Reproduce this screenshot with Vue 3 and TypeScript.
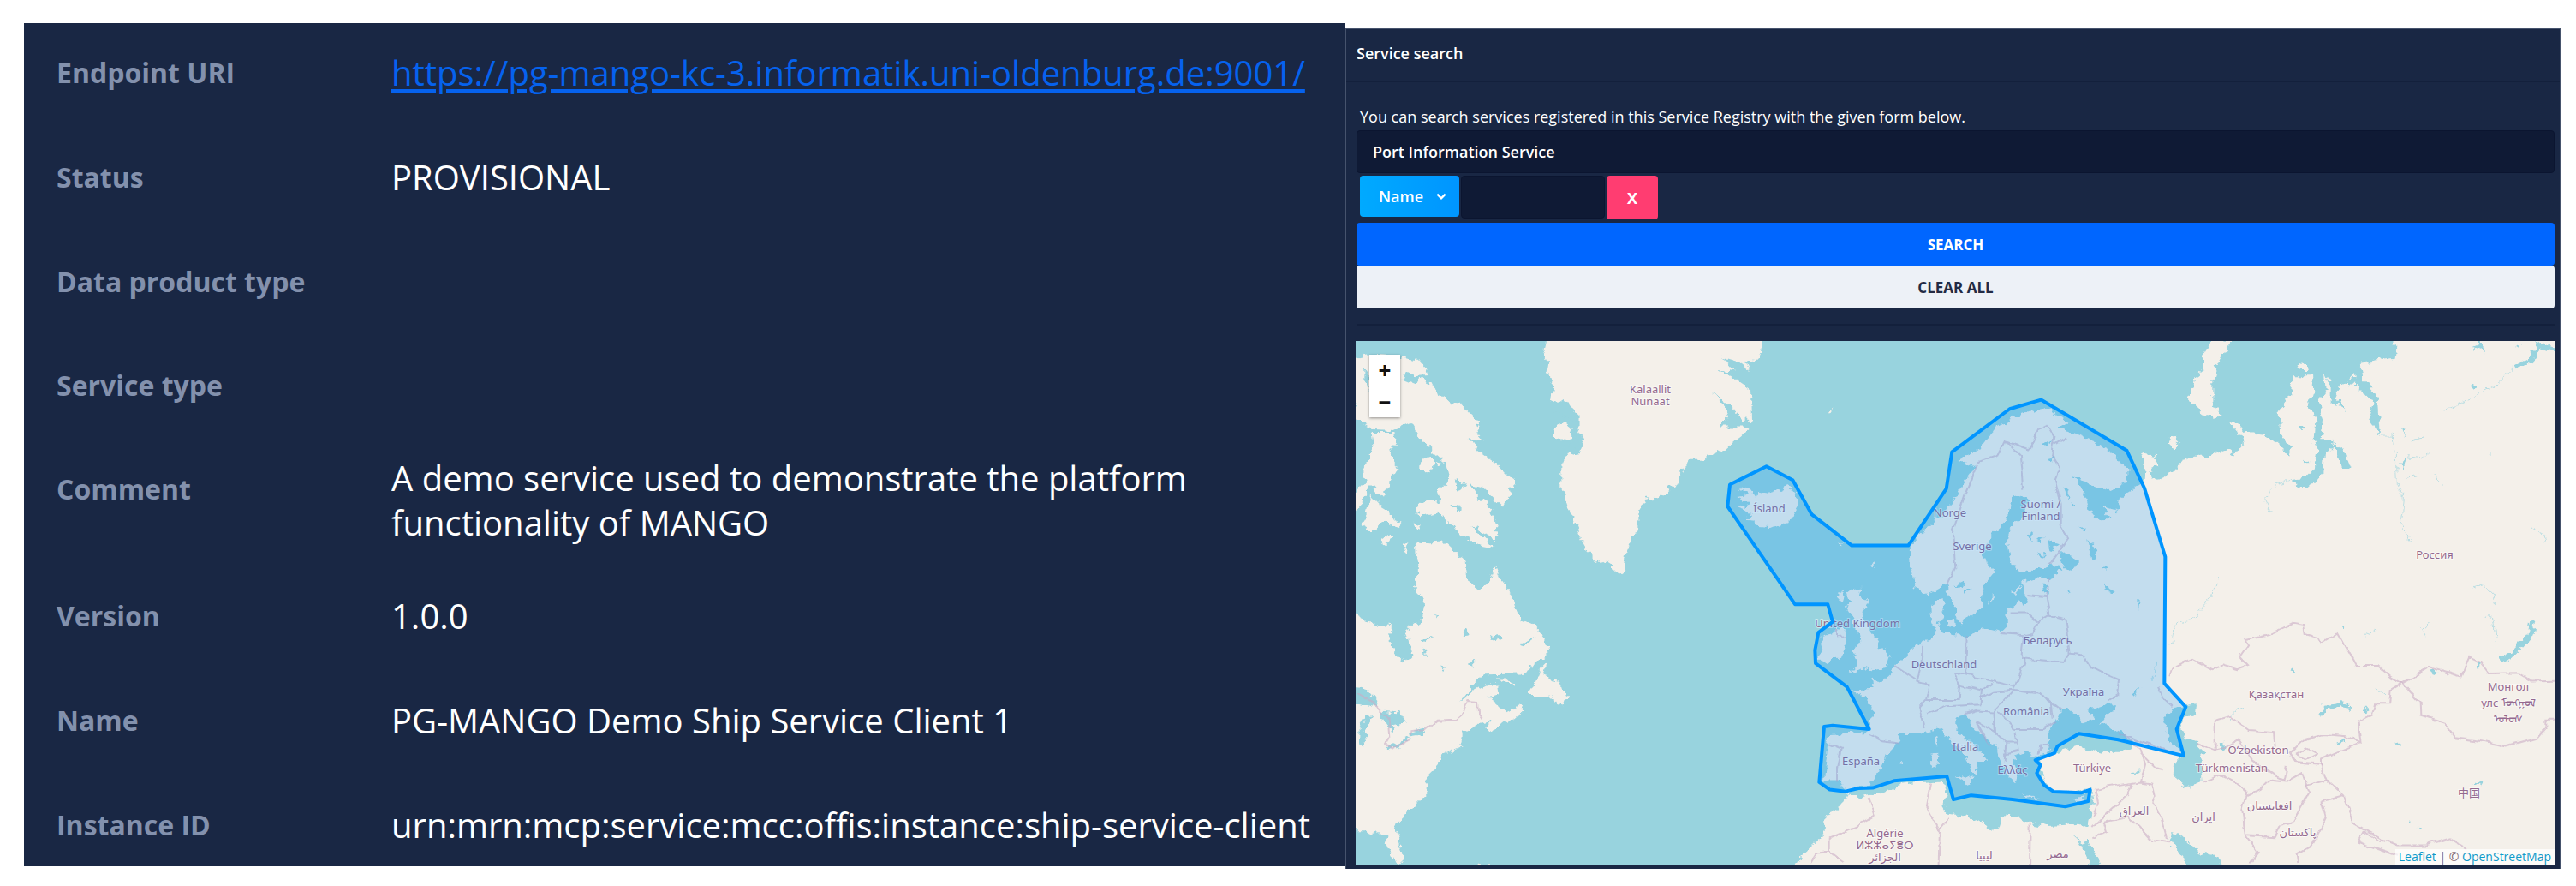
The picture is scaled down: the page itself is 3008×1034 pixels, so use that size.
<script setup lang="ts">
import { ref } from 'vue'

interface DetailRow {
  label: string
  value?: string
  href?: string
}

interface MapLabel {
  x: number
  y: number
  text: string
}

const details: DetailRow[] = [
  {
    label: 'Endpoint URI',
    value: 'https://pg-mango-kc-3.informatik.uni-oldenburg.de:9001/',
    href: 'https://pg-mango-kc-3.informatik.uni-oldenburg.de:9001/',
  },
  { label: 'Status', value: 'PROVISIONAL' },
  { label: 'Data product type' },
  { label: 'Service type' },
  { label: 'Comment', value: 'A demo service used to demonstrate the platform functionality of MANGO' },
  { label: 'Version', value: '1.0.0' },
  { label: 'Name', value: 'PG-MANGO Demo Ship Service Client 1' },
  { label: 'Instance ID', value: 'urn:mrn:mcp:service:mcc:offis:instance:ship-service-client' },
]

const query = ref('Port Information Service')
const field = ref('Name')
const fieldValue = ref('')

// Coastlines west of Iceland
const westLand: string[] = [
  'M60 65L110 57L225 62L285 68L310 90L318 112L270 115L240 102L230 125L270 138L300 122L345 140L360 172L400 190L440 195L470 220L495 245L508 270L490 275L515 300L470 292L500 330L560 365L600 400L630 418L605 440L610 455L585 488L550 460L510 430L470 420L500 460L540 490L565 545L560 585L520 560L475 540L550 605L500 597L440 570L400 530L350 505L290 515L280 490L310 470L370 478L355 440L400 405L385 360L340 330L300 300L260 245L200 268L120 265L60 235Z',
  'M125 275L205 275L210 310L190 325L212 385L180 430L165 462L130 430L110 430L90 480L60 512V455L110 410L95 385L120 345L130 310Z',
  'M120 455L150 480L180 495L190 520L230 535L215 548L175 530L150 535L130 560L90 540L110 510Z',
  'M158 582L185 566L202 572L180 594Z',
  'M235 597L252 588L245 614Z',
  'M298 378Q300 348 325 347Q348 355 342 380Q315 397 298 385Z',
  'M300 295L318 290L335 310L322 320ZM345 355L378 362L360 370ZM270 530L300 540L290 560Z',
  'M280 585L330 590L380 588L410 610L430 630L455 640L460 700L500 725L535 705L550 670L560 655L580 695L610 730L630 775L650 810L700 830L740 875L745 905L700 935L650 963L515 965L480 995L430 1045L480 1010L520 992L562 992L565 1020L530 1025L556 1040L570 1060L600 1072L630 1060L640 1045L655 1070L630 1088L580 1100L545 1128L525 1115L545 1098L500 1105L440 1130L430 1165L440 1172L370 1195L345 1240L320 1260L320 1300L260 1350L215 1385L210 1410L235 1470L232 1500L210 1497L180 1450L175 1425L150 1413L125 1418L100 1408L60 1408V790L130 820L192 826L195 890L240 935L265 910L250 838L300 810L310 770L300 740L270 715L292 675L285 630Z',
  'M740 930L715 950L690 1000L672 1025L740 1025L760 1040L800 1053L808 1035L790 1000L790 985L750 975L730 970Z',
  'M565 975L600 975L622 992L600 990Z',
  'M735 5L725 40L745 75L740 100L760 130L750 185L780 192L800 180L830 210L850 220L850 270L870 300L850 340L810 330L790 370L790 440L810 470L830 520L860 580L905 645L930 640L960 655L990 680L1008 670L1020 610L1040 575L1060 545L1060 500L1085 465L1130 460L1170 435L1190 430L1215 385L1240 355L1280 355L1360 325L1450 262L1400 262L1330 262L1375 240L1365 205L1320 165L1385 205L1430 240L1458 242L1455 155L1400 125L1340 100L1400 105L1350 60L1410 75L1455 105L1435 70L1480 75L1490 40L1500 5Z',
  'M500 1503L540 1503L540 1510L500 1510Z',
]

const westWater: string[] = [
  'M60 1000L110 1005L145 1040L140 1058L100 1050L60 1045Z',
  'M100 1090L130 1083L100 1120L110 1150L95 1172L78 1165L80 1115Z',
  'M150 1070L220 1075L242 1102L205 1108L195 1140L180 1110Z',
  'M175 1170L260 1142L250 1158L190 1177Z',
  'M255 1128L312 1116L300 1132L258 1138Z',
  'M100 90L116 110L112 160L100 140ZM60 160L72 200L60 220Z',
  'M762 215L850 235L850 320L790 322L830 300L845 250L780 225Z',
  'M415 405L440 415L455 432L425 440ZM405 480L435 488L425 502Z',
  'M540 855L575 850L580 862L548 868ZM440 845L462 835L470 855L450 858Z',
  'M365 950L388 935L370 955ZM300 865L345 858L310 875ZM345 790L362 795L350 800Z',
  'M650 875L700 855L690 862L655 882ZM465 930L480 925L482 945ZM300 890L320 905L305 905Z',
]

// Disko island, inside the bay on Greenland's west coast
const disko = 'M768 255L800 248L828 268L822 285L795 302L766 288Z'

// Coastlines from Iceland to the Yenisei
const eastLand: string[] = [
  'M-515 460L-480 455L-505 435L-480 430L-450 465L-440 445L-400 450L-360 440L-335 428L-300 465L-300 485L-330 525L-400 548L-450 545L-455 530L-485 528L-460 505L-510 490L-470 480Z',
  'M-202 222L-172 206L-185 222Z',
  'M-162 588L-148 590L-150 602ZM-45 655L-28 648L-35 670Z',
  'M-115 725L-80 720L-85 745L-48 755L-80 800L-40 845L-10 890L25 905L10 945L-40 950L-70 945L-125 968L-90 935L-100 925L-90 910L-120 900L-80 875L-90 840L-115 820L-110 800L-125 780L-135 768L-120 760L-130 735Z',
  'M-160 735L-140 725L-150 750L-165 760Z',
  'M-170 835L-132 838L-137 885L-150 915L-215 932L-230 920L-215 890L-225 860L-190 850Z',
  'M-115 1010L-40 1005L-45 980L-10 985L20 962L40 940L80 910L110 880L170 868L180 840L165 810L163 770L205 750L212 785L190 820L200 840L240 855L300 855L360 835L410 845L435 825L432 780L470 760L490 770L500 740L480 705L530 688L575 690L630 670L590 652L520 672L450 660L432 590L440 550L490 510L500 470L480 455L450 460L435 500L430 530L370 570L350 620L360 650L385 675L350 710L340 780L290 800L265 822L240 760L215 710L150 738L110 715L95 660L92 600L130 560L190 520L240 480L270 430L320 375L255 355L330 325L390 265L450 235L520 215L575 205L640 245L610 262L680 285L740 305L800 335L850 380L850 420L800 443L720 425L665 400L700 440L720 500L770 530L790 515L760 485L820 500L830 460L890 430L910 420L915 370L900 335L950 345L965 370L925 385L940 410L985 405L1030 370L1080 345L1130 345L1200 325L1230 342L1260 310L1250 275L1340 285L1400 325L1420 345L1425 320L1390 290L1385 215L1420 180L1435 115L1500 115L1505 170L1490 195L1510 240L1505 300L1520 325L1510 380L1480 405L1425 412L1450 430L1495 432L1540 390L1545 335L1580 315L1605 380L1635 378L1605 320L1570 300L1528 300L1540 240L1520 190L1550 155L1545 105L1565 140L1565 190L1625 215L1580 180L1600 140L1660 145L1700 185L1715 190L1700 240L1740 285L1735 230L1730 175L1680 130L1670 80L1790 65L1795 30L1785 5H2370V1525H1190L1170 1480L1100 1470L1050 1425L1010 1412L995 1430L1040 1480L1060 1525H740L715 1400L735 1310L725 1290L690 1290L640 1300L590 1295L560 1270L540 1230L550 1205L610 1185L680 1168L760 1185L830 1185L880 1165L840 1135L760 1105L810 1050L790 1045L720 1065L740 1090L700 1100L670 1075L640 1058L610 1080L590 1110L570 1160L590 1180L530 1200L490 1185L450 1200L470 1240L460 1275L440 1260L400 1200L395 1170L330 1130L280 1080L250 1085L250 1110L290 1150L340 1185L360 1210L330 1210L325 1250L305 1240L290 1200L240 1160L195 1115L120 1135L60 1135L40 1165L10 1190L-10 1230L-50 1280L-100 1285L-130 1300L-150 1270L-210 1270L-200 1190L-195 1135L-60 1130L-45 1100L-40 1060L-70 1030Z',
  'M250 1255L308 1255L300 1280Z',
  'M163 1190L190 1185L188 1228L168 1232ZM172 1155L188 1145L186 1175Z',
  'M480 1305L540 1313L500 1316ZM662 1322L708 1302L690 1326Z',
  'M42 1220L60 1212L58 1222ZM218 808L245 795L248 828L228 826ZM368 765L378 742L388 745Z',
  'M450 725L480 715L460 735Z',
  'M-318 1525L-290 1480L-210 1420L-205 1370L-150 1340L-125 1300L-90 1315L0 1300L60 1275L150 1270L205 1265L215 1300L205 1335L225 1360L310 1370L395 1412L410 1375L440 1360L510 1385L580 1395L680 1390L730 1400L780 1525Z',
  'M1155 5L1215 17L1165 85L1150 130L1150 190L1190 235L1120 225L1065 185L1070 155L1085 150L1090 120L1120 100L1115 60Z',
  'M997 310Q1005 290 1022 292L1037 305L1020 328Z',
  'M1212 245L1230 248L1262 275L1245 282Z',
  'M1450 102L1458 78L1480 85L1485 102ZM1630 120L1650 102L1652 125ZM1598 140L1625 128L1620 145Z',
]

const eastWater: string[] = [
  'M975 1095L1010 1060L1095 1050L1092 1080L1050 1090L1040 1120L1060 1150L1095 1160L1130 1190L1108 1195L1115 1270L1060 1282L1015 1255L1020 1220L1050 1195L1000 1150Z',
  'M666 1418L700 1450L712 1430L740 1475L775 1520L730 1520L695 1460Z',
  'M618 620L650 615L678 648L655 672L625 655ZM715 580L735 590L748 635L730 640Z',
  'M250 710L280 698L275 718ZM285 725L308 718L285 740ZM555 705L572 712L572 742L558 730Z',
  'M560 310L585 300L575 320ZM580 350L590 340L592 365ZM770 705L790 715L800 732L782 728Z',
  'M638 722L652 728L642 732ZM885 755L895 760L892 776ZM765 665L780 660L785 672Z',
  'M620 260L665 268L640 275ZM630 430L650 440L640 470ZM655 470L675 490L662 492ZM685 545L702 550L690 560Z',
  'M530 585L560 575L548 592ZM575 585L612 595L580 615ZM505 570L520 560L515 585ZM540 615L575 625L550 632Z',
  'M1178 1165L1192 1158L1195 1172L1182 1174ZM1575 1157L1612 1148L1622 1156L1588 1162Z',
  'M1910 958L1922 950L1934 960L1920 968ZM2078 930L2090 925L2088 955L2080 950Z',
  'M1420 958L1435 950L1438 962ZM1600 830L1615 825L1612 840ZM2055 145L2070 138L2078 150L2062 152Z',
  'M2065 1275L2085 1268L2092 1282ZM1810 365L1830 345L1820 382ZM1815 262L1825 265L1822 285Z',
  'M2058 30L2085 20L2110 50L2090 40ZM2070 35L2080 45L2072 46ZM2215 30L2228 35L2220 40Z',
  'M1840 1375L1850 1382L1842 1384ZM1870 1400L1882 1398L1880 1405ZM1795 1163L1808 1160L1806 1168Z',
  'M2118 340L2128 336L2128 346ZM1455 258L1475 262L1460 275ZM1470 355L1490 365L1475 366Z',
  'M875 1240L900 1235L885 1245ZM870 1020L895 1005L880 1028Z',
]

// Rivers and long lakes
const rivers: string[] = [
  'M1740 285L1780 285L1792 340L1795 420L1822 465L1812 545L1845 585',
  'M2205 95L2130 150L2060 180L1960 215',
  'M1425 412L1370 425L1335 465L1360 505',
  'M1170 690L1150 740L1085 805L1020 820L1005 880',
  'M950 930L945 980M2060 720L2100 710L2130 735L2145 765M1890 830L1915 815M1880 825L1900 860',
  'M1835 345L1880 350L1910 338M1840 300L1885 292M1830 405L1870 398M1930 395L1955 425',
  'M1680 855L1720 835M2105 800L2130 795L2145 870M2270 545L2320 570L2305 590M1720 1000L1755 1025',
  'M1205 1100L1210 1080L1260 1060',
]

const wideWater: string[] = [
  'M2275 812L2266 850L2235 880L2195 912L2160 925',
  'M1527 1082L1545 1058L1590 1052L1638 1056',
  'M2350 45L2295 30L2262 72L2210 95',
  'M1680 1055L1695 1070',
]

const borders: string[] = [
  'M-1845 1020L-1790 1045L-1735 1090L-1730 1140L-1748 1165L-1720 1172L-1660 1148L-1658 1130L-1610 1125L-1570 1095L-1500 1093L-1480 1080L-1460 1040L-1425 1042L-1422 1075L-1408 1092',
  'M220 710L250 660L240 560L285 450L330 360L400 340L425 300L480 345L490 440M425 300L510 325L540 270L570 258L595 290L585 340L615 380L600 410L620 480L620 540L645 575L580 650M595 310L640 290',
  'M575 690L568 740L580 795L540 815L500 790L440 790M505 740L565 745M580 795L635 810L650 905L700 910L720 940L780 965L825 980L820 1020L785 1040M650 905L630 930L500 920L480 920L490 850L410 845M545 815L520 850L490 855',
  'M490 920L490 930L460 1000L385 985L285 965L290 855M135 880L130 940L115 985L160 995L150 1035L260 1035L265 990L250 965L290 960M40 940L115 980M150 1035L120 1060L140 1115M150 1075L220 1055L340 1050L345 1010L265 995',
  'M345 1010L380 990M345 1030L380 1015L455 1010L385 1070L330 1068L280 1080M385 1070L390 1130L320 1095L370 1165M455 1010L550 1020L610 1060L620 1060M550 1015L585 1050L590 1090M460 1120L400 1070M460 1120L560 1120L600 1100M460 1130L470 1180L420 1190M390 1130L430 1160L425 1210M430 1160L470 1160M545 1190L550 1165L580 1170',
  'M-50 1135L0 1155L55 1160M-195 1160L-150 1175L-165 1230L-165 1270M-168 835L-168 858L-135 855',
  'M1000 970L1010 945L1080 920L1150 950L1190 938L1240 950L1275 940L1245 915L1275 880L1265 865L1350 850L1430 820L1470 825L1475 850L1520 860L1530 875L1590 845L1655 940L1730 940L1780 975L1815 990L1910 945L2020 970L2050 915L2090 930L2120 962L2220 960L2270 985L2350 983',
  'M1815 990L1880 1045L1882 1080L1960 1100L2000 1145L2100 1155L2180 1170L2290 1145L2320 1115L2320 1095L2350 1095M1815 990L1775 1010L1770 1045L1720 1045L1710 1080L1660 1100L1670 1160L1620 1140L1540 1135L1470 1150L1420 1190L1440 1215L1530 1222L1530 1205L1600 1180L1670 1160',
  'M1160 1180L1160 1095L1210 1083L1280 1125L1365 1130L1370 1170M1095 1160L1160 1180L1190 1175L1240 1150L1290 1210L1370 1255L1400 1265L1410 1222M1440 1190L1480 1175L1515 1190L1480 1205L1440 1190M1530 1222L1550 1265L1480 1280L1465 1245L1410 1270',
  'M1120 1275L1180 1250L1230 1270L1270 1300L1255 1350L1265 1420L1370 1425L1390 1395L1430 1385L1490 1300L1480 1280M1270 1310L1320 1290L1350 1265L1410 1270M1265 1420L1310 1470L1280 1500M1450 1500L1445 1475L1500 1450L1550 1370L1535 1325L1610 1310L1550 1265M1610 1310L1640 1370L1640 1385L1740 1430L1800 1450L1900 1450L1980 1430L2040 1460M1680 1410L1660 1440L1800 1480M1680 1410L1740 1440',
  'M730 1370L750 1330L740 1290L850 1275L900 1270L940 1275L950 1310L940 1330L970 1370L990 1430M730 1400L780 1360L850 1310L870 1270M730 1430L780 1410L770 1385L860 1370L930 1430L1000 1440M900 1270L915 1220L900 1180L840 1135M900 1190L950 1230L980 1235M820 1130L940 1165L1000 1185M960 1000L975 1030L1010 1055',
  'M510 1525L512 1385M190 1525L195 1410L150 1340L165 1275M190 1410L230 1370M-52 1315L-30 1365L-80 1390L-190 1430L-190 1470L-140 1500M-190 1470L-240 1475L-260 1500',
]

// Search area drawn by the user
const area =
  'M-412 373L-320 412L-253 510L-113 598L85 598L218 437L238 332L440 210L550 184L850 328L912 435L985 630L982 990L1057 1057L1025 1120L1050 1196L820 1150L683 1133L608 1168L597 1188L530 1208L548 1222L535 1245L562 1280L595 1298L690 1301L722 1292L715 1325L635 1340L450 1320L305 1308L243 1320L220 1254L35 1267L-40 1287L-90 1288L-135 1297L-190 1292L-227 1271L-210 1113L-180 1110L-52 1120L-130 1000L-240 933L-242 895L-230 845L-180 815L-197 765L-312 765L-548 487L-540 425Z'

const labels: MapLabel[] = [
  { x: 344, y: 61, text: 'Kalaallit' },
  { x: 344, y: 75, text: 'Nunaat' },
  { x: 483, y: 200, text: 'Ísland' },
  { x: 694, y: 205, text: 'Norge' },
  { x: 720, y: 244, text: 'Sverige' },
  { x: 800, y: 195, text: 'Suomi /' },
  { x: 800, y: 209, text: 'Finland' },
  { x: 586, y: 334, text: 'United Kingdom' },
  { x: 687, y: 382, text: 'Deutschland' },
  { x: 808, y: 354, text: 'Беларусь' },
  { x: 850, y: 414, text: 'Україна' },
  { x: 783, y: 437, text: 'România' },
  { x: 712, y: 478, text: 'Italia' },
  { x: 767, y: 505, text: 'Ελλάς' },
  { x: 860, y: 503, text: 'Türkiye' },
  { x: 590, y: 495, text: 'España' },
  { x: 618, y: 579, text: 'Algérie' },
  { x: 618, y: 593, text: 'ⵍⵣⵣⴰⵢⴻⵔ' },
  { x: 618, y: 607, text: 'الجزائر' },
  { x: 734, y: 605, text: 'ليبيا' },
  { x: 820, y: 603, text: 'مصر' },
  { x: 909, y: 553, text: 'العراق' },
  { x: 990, y: 560, text: 'ایران' },
  { x: 1260, y: 254, text: 'Россия' },
  { x: 1075, y: 417, text: 'Қазақстан' },
  { x: 1054, y: 482, text: 'Oʻzbekiston' },
  { x: 1023, y: 503, text: 'Türkmenistan' },
  { x: 1067, y: 547, text: 'افغانستان' },
  { x: 1100, y: 578, text: 'پاکستان' },
  { x: 1346, y: 408, text: 'Монгол' },
  { x: 1346, y: 427, text: 'улс ᠮᠣᠩᠭᠣᠯ' },
  { x: 1346, y: 446, text: 'ᠤᠯᠤᠰ' },
  { x: 1300, y: 532, text: '中国' },
]
</script>

<template>
  <main class="page">
    <section class="details" aria-label="Service details">
      <dl class="detail-list">
        <div v-for="row in details" :key="row.label" class="detail" :class="{ 'detail--empty': !row.value }">
          <dt>{{ row.label }}</dt>
          <dd>
            <a v-if="row.href" :href="row.href">{{ row.value }}</a>
            <template v-else>{{ row.value }}</template>
          </dd>
        </div>
      </dl>
    </section>

    <section class="search">
      <header class="search-head"><h1>Service search</h1></header>
      <form class="search-form" @submit.prevent>
        <p class="hint">You can search services registered in this Service Registry with the given form below.</p>
        <input v-model="query" class="query" type="text" aria-label="Search text" />
        <div class="filter">
          <div class="field">
            <select v-model="field" aria-label="Search field">
              <option>Name</option>
              <option>Status</option>
              <option>Version</option>
            </select>
            <svg class="chevron" viewBox="0 0 12 12" aria-hidden="true"><path d="M2 4L6 8L10 4" /></svg>
          </div>
          <input v-model="fieldValue" class="field-value" type="text" aria-label="Field value" />
          <button class="remove" type="button">X</button>
        </div>
        <button class="submit" type="submit">SEARCH</button>
        <button class="clear" type="button">CLEAR ALL</button>
      </form>
      <hr />
      <div class="map">
        <svg class="map-canvas" viewBox="0 0 1400 611" role="img" aria-label="Map">
          <defs>
            <filter id="coast" x="0" y="0" width="1400" height="611" filterUnits="userSpaceOnUse">
              <feTurbulence type="fractalNoise" baseFrequency="0.11" numOctaves="3" seed="7" result="noise" />
              <feDisplacementMap in="SourceGraphic" in2="noise" scale="11" xChannelSelector="R" yChannelSelector="G" />
            </filter>
            <filter id="frontier" x="0" y="0" width="1400" height="611" filterUnits="userSpaceOnUse">
              <feTurbulence type="fractalNoise" baseFrequency="0.08" numOctaves="2" seed="3" result="noise" />
              <feDisplacementMap in="SourceGraphic" in2="noise" scale="7" xChannelSelector="R" yChannelSelector="G" />
            </filter>
          </defs>
          <g filter="url(#coast)">
            <g transform="translate(-23 -7) scale(0.33333 0.41068)">
              <path v-for="d in westLand" :key="d" :d="d" class="land" />
              <path v-for="d in westWater" :key="d" :d="d" class="water" />
              <path :d="disko" class="land" />
            </g>
            <g transform="translate(617 -7) scale(0.33333 0.41068)">
              <path v-for="d in eastLand" :key="d" :d="d" class="land" />
              <path v-for="d in eastWater" :key="d" :d="d" class="water" />
              <path v-for="d in rivers" :key="d" :d="d" class="river" />
              <path v-for="d in wideWater" :key="d" :d="d" class="river river--wide" />
            </g>
          </g>
          <g filter="url(#frontier)">
            <g transform="translate(617 -7) scale(0.33333 0.41068)">
              <path v-for="d in borders" :key="d" :d="d" class="border" />
            </g>
          </g>
          <text v-for="l in labels" :key="l.text" :x="l.x" :y="l.y" class="place">{{ l.text }}</text>
          <g transform="translate(617 -7) scale(0.33333 0.41068)">
            <path :d="area" class="area" />
          </g>
        </svg>
        <div class="zoom">
          <button type="button" aria-label="Zoom in">+</button>
          <button type="button" aria-label="Zoom out">−</button>
        </div>
        <p class="credit"><a href="#leaflet">Leaflet</a> | © <a href="#osm">OpenStreetMap</a></p>
      </div>
    </section>
  </main>
</template>

<style>
body {
  margin: 0;
  background: #fff;
}
</style>

<style scoped>
* {
  box-sizing: border-box;
}

.page {
  display: grid;
  grid-template-columns: 1543fr 1419fr;
  align-items: start;
  padding: 27px 18px 20px 28px;
  font-family: 'Open Sans', 'Noto Sans', sans-serif;
  color: #fff;
}

.details {
  background: #192744;
  padding: 12px 24px 2px 38px;
}

.detail-list {
  display: flex;
  flex-direction: column;
  gap: 30px;
  margin: 0;
}

.detail {
  display: grid;
  grid-template-columns: 391px minmax(0, 1fr);
  min-height: 92px;
}

.detail--empty {
  min-height: 91px;
}

dt {
  padding-top: 20px;
  font-size: 32px;
  line-height: 52px;
  font-weight: 700;
  color: #8391ad;
}

dd {
  align-self: center;
  margin: 0;
  padding: 7px 0;
  font-size: 40px;
  line-height: 52px;
}

dd a {
  color: #0662ee;
  text-decoration-thickness: 4px;
  text-underline-offset: 4px;
}

.search {
  margin-top: 6px;
  padding-bottom: 5px;
  background: #192744;
  border: 1px solid #46536d;
  border-bottom: 0;
}

.search-head {
  padding: 15px 12px 19px;
  border-bottom: 2px solid #13203c;
}

h1 {
  margin: 0;
  font-size: 18px;
  line-height: 26px;
  font-weight: 600;
}

.search-form {
  display: flex;
  flex-direction: column;
  padding: 28px 6px 0 12px;
}

.hint {
  margin: 0;
  padding: 0 4px 4px;
  font-size: 18px;
  line-height: 24px;
}

input,
select,
button {
  font-family: inherit;
  font-size: 18px;
  font-weight: 600;
  color: #fff;
  border: 0;
  margin: 0;
}

.query,
.field-value {
  height: 50px;
  padding: 0 18px;
  background: #0f1a35;
  border: 1px solid #0b1530;
  border-radius: 4px;
}

.filter {
  display: flex;
  align-items: flex-start;
  gap: 2px;
  padding: 3px 4px 4px;
}

.field {
  display: grid;
  width: 116px;
}

.field > * {
  grid-area: 1 / 1;
}

select {
  appearance: none;
  height: 48px;
  padding: 0 22px;
  border-radius: 4px;
  background: linear-gradient(90deg, #00aaff, #0095ff);
}

.chevron {
  align-self: center;
  justify-self: end;
  width: 14px;
  height: 14px;
  margin-right: 14px;
  fill: none;
  stroke: #fff;
  stroke-width: 2;
  pointer-events: none;
}

.field-value {
  width: 168px;
}

.remove {
  width: 60px;
  height: 51px;
  border-radius: 4px;
  background: #ff3d71;
  font-weight: 700;
}

.submit,
.clear {
  height: 50px;
  font-size: 17px;
  font-weight: 700;
  border-radius: 4px;
}

.submit {
  background: #0066ff;
}

.clear {
  background: #edf1f7;
  color: #222b45;
}

hr {
  height: 2px;
  margin: 18px 6px 18px 12px;
  border: 0;
  background: #13203c;
}

.map {
  position: relative;
  margin: 0 6px 0 11px;
  overflow: hidden;
  background: #98d3de;
}

.map-canvas {
  display: block;
  width: 100%;
}

.land {
  fill: #f4f0ea;
}

.water {
  fill: #98d3de;
}

.river {
  fill: none;
  stroke: #98d3de;
  stroke-width: 1;
  vector-effect: non-scaling-stroke;
  opacity: 0.6;
}

.river--wide {
  stroke-width: 6;
  opacity: 1;
}

.border {
  fill: none;
  stroke: #c9aec4;
  stroke-width: 2;
  stroke-opacity: 0.6;
  vector-effect: non-scaling-stroke;
}

.area {
  fill: #0090ff;
  fill-opacity: 0.2;
  stroke: #0095ff;
  stroke-width: 4;
  stroke-linejoin: round;
  vector-effect: non-scaling-stroke;
}

.place {
  fill: #94698f;
  font-family: 'Noto Sans', 'DejaVu Sans', 'Noto Sans CJK SC', sans-serif;
  font-size: 13px;
  text-anchor: middle;
  paint-order: stroke;
  stroke: #fff;
  stroke-opacity: 0.5;
  stroke-width: 2;
}

.zoom {
  position: absolute;
  top: 16px;
  left: 16px;
  display: flex;
  flex-direction: column;
  gap: 1px;
  width: 36px;
  background: #ccc;
  box-shadow: 0 1px 3px rgba(0, 0, 0, 0.4);
}

.zoom button {
  height: 36px;
  padding: 0;
  background: #fff;
  color: #111;
  font-size: 26px;
  line-height: 36px;
  font-weight: 700;
}

.credit {
  position: absolute;
  right: 0;
  bottom: 0;
  margin: 0;
  padding: 0 4px;
  background: rgba(255, 255, 255, 0.7);
  color: #7a5f6a;
  font-size: 14px;
  line-height: 18px;
}

.credit a {
  color: #0f9aca;
  text-decoration: none;
}
</style>
